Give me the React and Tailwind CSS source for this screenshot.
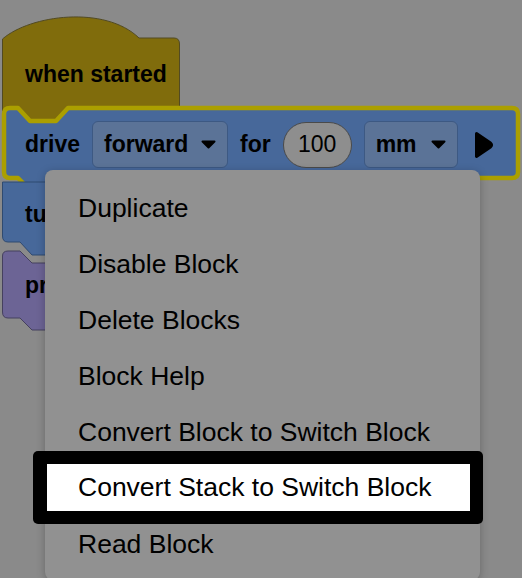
import React from "react";

const menuItems = [
  "Duplicate",
  "Disable Block",
  "Delete Blocks",
  "Block Help",
  "Convert Block to Switch Block",
  "Convert Stack to Switch Block",
  "Read Block",
];

function Caret() {
  return (
    <svg width="15" height="9" viewBox="0 0 15 9" className="shrink-0">
      <path d="M1.5 1.5 L13.5 1.5 L7.5 7.5 Z" fill="#000" stroke="#000" strokeWidth="2" strokeLinejoin="round" />
    </svg>
  );
}

function Dropdown({ label, width }) {
  return (
    <div className={`flex h-[47px] items-center justify-between rounded-[6px] border border-[#3d5983] bg-[#5b7397] pl-[11px] pr-[11px] ${width}`}>
      <span>{label}</span>
      <Caret />
    </div>
  );
}

export default function App() {
  return (
    <div className="relative h-[578px] w-[522px] overflow-hidden bg-[#8a8a8a] font-['Liberation_Sans','Helvetica',sans-serif] text-black">
      {/* block stack */}
      <div className="flex flex-col pt-[15px]">
        {/* hat block */}
        <div className="relative h-[90px] w-[182px]">
          <svg className="absolute left-0 top-0 overflow-visible" width="182" height="90" viewBox="0 0 182 90">
            <path
              d="M2.5 24 C 30 0 105 -10 139 23 L 174 23 Q 179.5 23 179.5 29 L 179.5 96 L 70 96 L 58 108 L 32 108 L 20 96 L 2.5 96 Z"
              fill="#806c0c"
              stroke="#524a22"
              strokeWidth="1"
            />
          </svg>
          <div className="relative pl-[25px] pt-[47px] text-[23px] font-bold leading-[24px]">when started</div>
        </div>

        {/* drive block */}
        <div className="relative h-[75px] w-[522px]">
          <svg className="absolute left-0 top-0 overflow-visible" width="522" height="75" viewBox="0 0 522 75">
            <path
              d="M4 9 Q4 3 10 3 L18 3 L30 16 L56 16 L68 3 L512 3 Q518 3 518 9 L518 67 Q518 73 512 73 L68 73 L56 85 L30 85 L18 73 L10 73 Q4 73 4 67 Z"
              fill="#47689a"
              stroke="#ab9f00"
              strokeWidth="4.5"
              strokeLinejoin="round"
            />
          </svg>
          <div className="relative flex h-full items-center pl-[25px] pt-[4px] text-[23px] font-bold">
            <span>drive</span>
            <div className="ml-[12px]">
              <Dropdown label="forward" width="w-[136px]" />
            </div>
            <span className="ml-[12px]">for</span>
            <div className="ml-[12px] flex h-[46px] w-[69px] items-center justify-center rounded-full border border-[#4a4a4a] bg-[#8e8e8e] font-normal">
              100
            </div>
            <div className="ml-[12px]">
              <Dropdown label="mm" width="w-[94px]" />
            </div>
            <svg width="20" height="28" viewBox="0 0 20 28" className="ml-[16px]">
              <path d="M2.5 2.5 L16.5 12 Q18.5 14 16.5 16 L2.5 25.5 Z" fill="#000" stroke="#000" strokeWidth="3" strokeLinejoin="round" />
            </svg>
          </div>
        </div>

        {/* turn block */}
        <div className="relative h-[70px] w-[200px]">
          <svg className="absolute left-0 top-0 overflow-visible" width="200" height="70" viewBox="0 0 200 70">
            <path
              d="M2.5 2 L198 2 L198 62 L70 62 L58 75 L32 75 L20 62 L8 62 Q2.5 62 2.5 56 Z"
              fill="#47689a"
              stroke="#2f4a70"
              strokeWidth="1"
            />
          </svg>
          <div className="relative pl-[25px] pt-[22px] text-[23px] font-bold leading-[24px]">turn</div>
        </div>

        {/* purple block */}
        <div className="relative h-[68px] w-[200px]">
          <svg className="absolute left-0 top-0 overflow-visible" width="200" height="68" viewBox="0 0 200 68">
            <path
              d="M2.5 6 Q2.5 1 8 1 L20 1 L32 13 L58 13 L70 1 L198 1 L198 68 L70 68 L58 80 L32 80 L20 68 L8 68 Q2.5 68 2.5 62 Z"
              fill="#6c6495"
              stroke="#45405e"
              strokeWidth="1"
            />
          </svg>
          <div className="relative pl-[25px] pt-[23px] text-[23px] font-bold leading-[24px]">print</div>
        </div>
      </div>

      {/* context menu */}
      <div className="absolute left-[45px] top-[170px] flex h-[410px] w-[435px] flex-col rounded-[8px] bg-[#919191] pt-[11px] text-[26.5px] shadow-[0_2px_8px_rgba(0,0,0,0.25)]">
        {menuItems.map((item) =>
          item === "Convert Stack to Switch Block" ? (
            <div key={item} className="-mb-[7px] -ml-[12px] -mt-[10px] h-[73px] w-[450px] rounded-[5px] bg-black p-[13px] pl-[14px]">
              <div className="flex h-[47px] items-center bg-white pl-[31px]">{item}</div>
            </div>
          ) : (
            <div key={item} className="flex h-[56px] items-center pl-[33px]">
              {item}
            </div>
          )
        )}
      </div>
    </div>
  );
}
